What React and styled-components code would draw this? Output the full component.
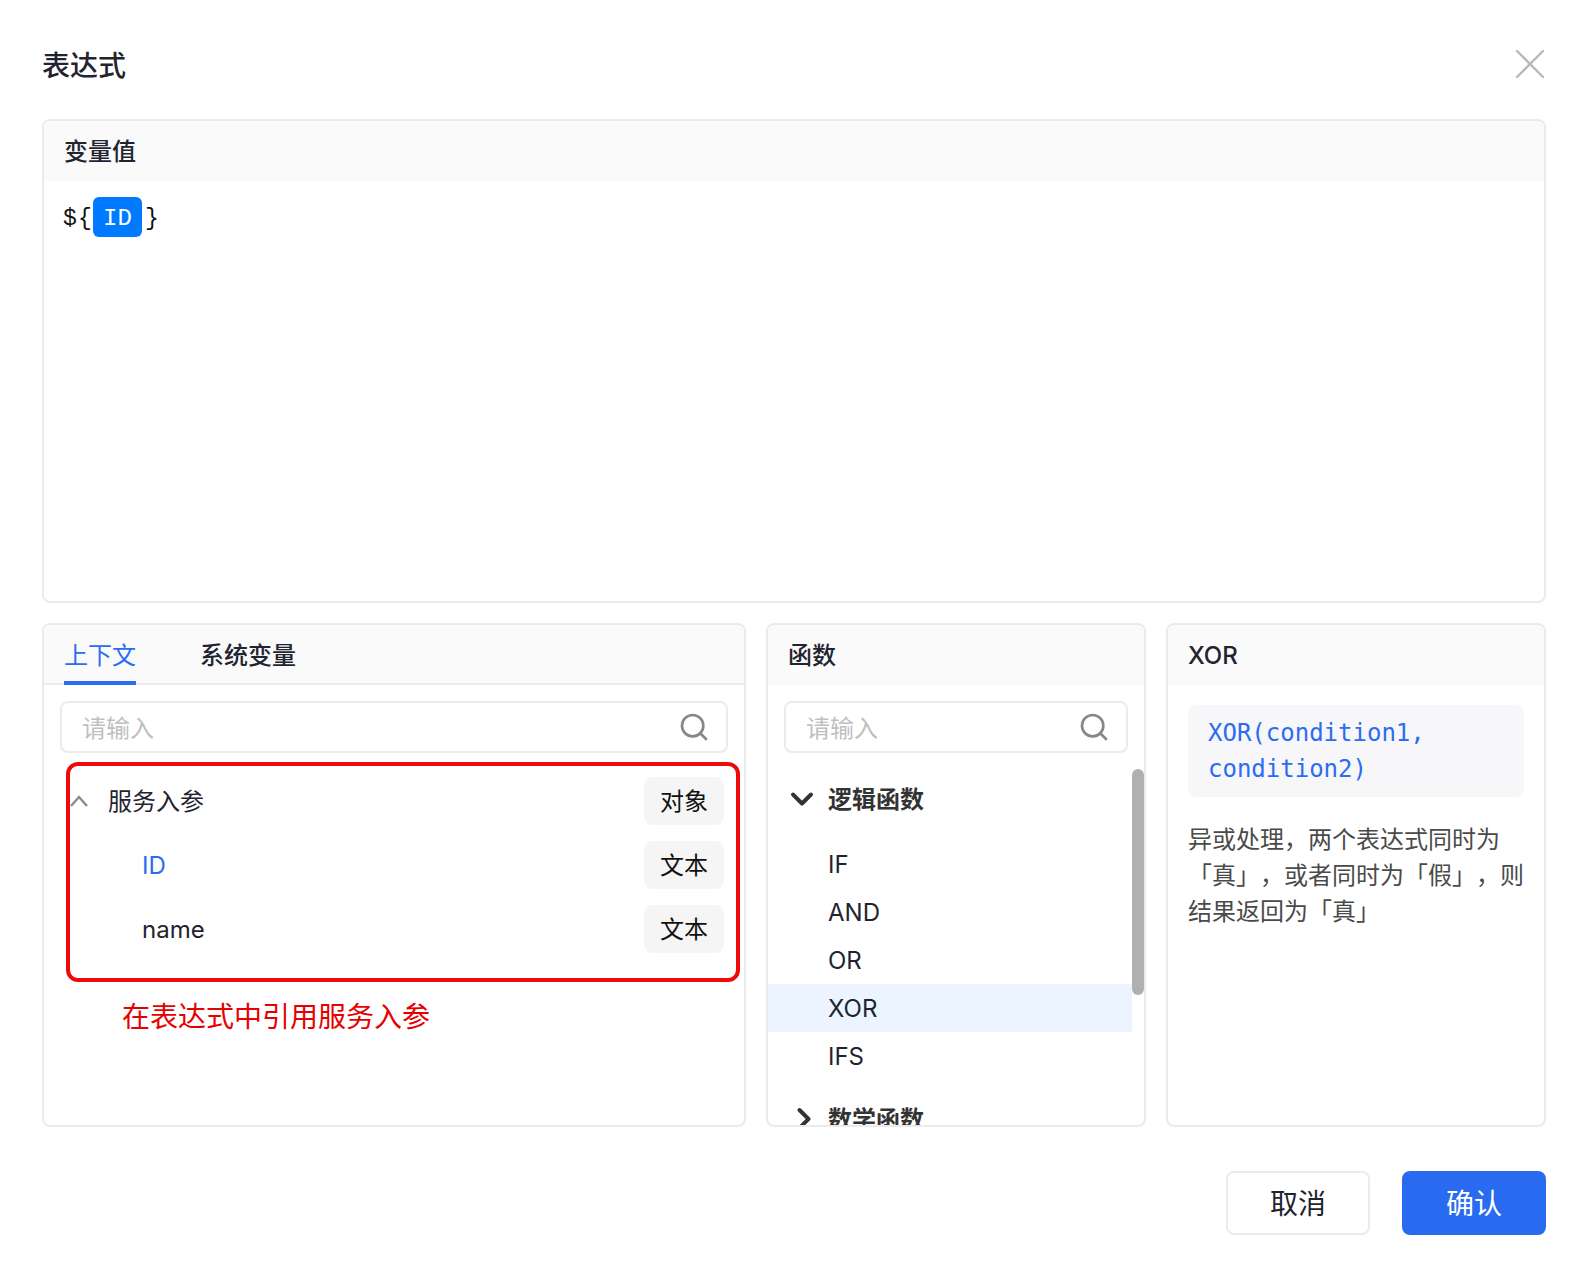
import React from 'react';
import styled, { createGlobalStyle } from 'styled-components';
import { ChevronDown, ChevronRight, Search } from 'lucide-react';

const GlobalStyle = createGlobalStyle`
  html, body {
    margin: 0;
    padding: 0;
    background: #fff;
  }

  * {
    box-sizing: border-box;
  }

  body {
    font-family: Inter, "Noto Sans CJK SC", "Noto Sans", sans-serif;
    color: #1f2430;
  }
`;

const Dialog = styled.div`
  width: 1588px;
  height: 1272px;
  padding: 0 42px;
`;

const DialogHeader = styled.header`
  height: 119px;
  display: flex;
  justify-content: space-between;
  padding-top: 47px;
`;

const Title = styled.h1`
  margin: 0;
  font-size: 28px;
  line-height: 38px;
  font-weight: 500;
`;

const CloseIcon = styled.svg`
  width: 30px;
  height: 30px;
  margin-top: 2px;
  margin-right: 1px;
  stroke: #b8b9be;
  stroke-width: 2.4;
  stroke-linecap: round;
`;

const Panel = styled.section`
  height: ${(p) => p.$height}px;
  border: 2px solid #ebebeb;
  border-radius: 8px;
  overflow: hidden;
  display: flex;
  flex-direction: column;
  background: #fff;
`;

const PanelHeader = styled.div`
  flex: none;
  height: 60px;
  padding: 0 20px ${(p) => (p.$cjk ? 4 : 0)}px;
  display: flex;
  align-items: center;
  background: #fafafa;
  font-size: 24px;
  font-weight: 500;
`;

const Editor = styled.div`
  display: flex;
  align-items: center;
  padding: 16px 19px;
  font-family: "Liberation Mono", monospace;
  font-size: 23px;
  color: #111;
`;

const Token = styled.span`
  width: ${(p) => p.$width}px;
  padding-top: 4px;
`;

const Chip = styled.span`
  width: 49px;
  height: 40px;
  margin-right: 3px;
  padding-top: 2px;
  border-radius: 6px;
  background: #007aff;
  color: #fff;
  font-size: 24px;
  display: flex;
  align-items: center;
  justify-content: center;
`;

const BottomGrid = styled.div`
  margin-top: 20px;
  display: grid;
  grid-template-columns: 704px 380px 380px;
  gap: 20px;
`;

const Tabs = styled.div`
  flex: none;
  height: 60px;
  padding: 0 20px;
  display: flex;
  gap: 64px;
  background: #fafafa;
  border-bottom: 2px solid #ebebeb;
`;

const Tab = styled.div`
  height: 60px;
  display: flex;
  align-items: center;
  font-size: 24px;
  font-weight: ${(p) => (p.$active ? 400 : 500)};
  color: ${(p) => (p.$active ? '#2b6cf0' : '#1f2430')};
  border-bottom: 4px solid ${(p) => (p.$active ? '#2b6cf0' : 'transparent')};
`;

const SearchBox = styled.div`
  flex: none;
  height: 52px;
  margin: 16px 16px 0;
  padding: 0 16px 0 20px;
  border: 2px solid #ebebeb;
  border-radius: 8px;
  display: flex;
  align-items: center;
  justify-content: space-between;
  font-size: 24px;
  color: #bfbfbf;

  svg {
    color: #86868c;
  }
`;

const Placeholder = styled.span`
  padding-bottom: 2px;
`;

const Tree = styled.div`
  position: relative;
  padding: 16px 20px 0 26px;
`;

const RedFrame = styled.div`
  position: absolute;
  top: 9px;
  left: 22px;
  width: 674px;
  height: 220px;
  border: 4px solid #ee0a0a;
  border-radius: 12px;
  pointer-events: none;
`;

const TreeRow = styled.div`
  height: 64px;
  display: flex;
  align-items: center;
  padding-left: ${(p) => p.$indent}px;
  font-size: 24px;
  color: ${(p) => (p.$active ? '#2b6cf0' : '#1f2430')};
`;

const CollapseIcon = styled.svg`
  flex: none;
  width: 18px;
  height: 12px;
  margin-right: 20px;
  fill: none;
  stroke: #8c8c8c;
  stroke-width: 2.4;
`;

const RowLabel = styled.span`
  flex: 1;
  padding-bottom: ${(p) => (p.$cjk ? 4 : 0)}px;
`;

const TypeTag = styled.span`
  width: 80px;
  height: 48px;
  padding-bottom: 4px;
  border-radius: 8px;
  background: #f5f5f5;
  color: #111;
  display: flex;
  align-items: center;
  justify-content: center;
`;

const Annotation = styled.p`
  margin: 36px 0 0 52px;
  font-size: 28px;
  line-height: 40px;
  color: #e60000;
`;

const FunctionArea = styled.div`
  flex: 1;
  min-height: 0;
  display: flex;
  overflow: hidden;
`;

const FunctionList = styled.div`
  width: 364px;
  padding-top: 23px;
`;

const GroupHeader = styled.div`
  height: 48px;
  padding-left: ${(p) => p.$pad}px;
  display: flex;
  align-items: center;
  font-size: 24px;
  font-weight: 700;
  color: #333;

  svg {
    margin-right: ${(p) => p.$gap}px;
    margin-bottom: 3px;
    flex: none;
  }

  span {
    padding-bottom: 6px;
  }
`;

const FunctionItems = styled.div`
  margin: 16px 0;
`;

const FunctionItem = styled.div`
  height: 48px;
  padding-left: 60px;
  display: flex;
  align-items: center;
  font-size: 24px;
  background: ${(p) => (p.$selected ? '#ebf4ff' : 'transparent')};
`;

const ScrollThumb = styled.div`
  width: 12px;
  height: 226px;
  margin-top: 16px;
  border-radius: 6px;
  background: #b0b0b0;
`;

const DetailBody = styled.div`
  padding: 20px 20px 0;
`;

const CodeBlock = styled.div`
  height: 92px;
  padding: 10px 20px;
  border-radius: 8px;
  background: #f7f7f9;
  font-family: "DejaVu Sans Mono", monospace;
  font-size: 24px;
  line-height: 36px;
  color: #2b6cf0;
`;

const Description = styled.p`
  margin: 25px 0 0;
  font-size: 24px;
  line-height: 36px;
  color: #4a4a4a;
  text-spacing-trim: space-all;
`;

const Footer = styled.footer`
  margin-top: 44px;
  display: flex;
  justify-content: flex-end;
  gap: 32px;
`;

const Button = styled.button`
  width: 144px;
  height: 64px;
  border-radius: 8px;
  border: 2px solid ${(p) => (p.$primary ? '#296bf0' : '#ebebeb')};
  background: ${(p) => (p.$primary ? '#296bf0' : '#fff')};
  color: ${(p) => (p.$primary ? '#fff' : '#1f2430')};
  font-family: inherit;
  font-size: 28px;
  padding: 0 0 3px;
`;

const rows = [
  { label: 'ID', type: '文本', active: true },
  { label: 'name', type: '文本' },
];

const functions = ['IF', 'AND', 'OR', 'XOR', 'IFS'];

function SearchInput() {
  return (
    <SearchBox>
      <Placeholder>请输入</Placeholder>
      <Search size={32} strokeWidth={2} />
    </SearchBox>
  );
}

export default function App() {
  return (
    <>
      <GlobalStyle />
      <Dialog>
        <DialogHeader>
          <Title>表达式</Title>
          <CloseIcon viewBox="0 0 30 30">
            <path d="M2 2 L28 28 M28 2 L2 28" />
          </CloseIcon>
        </DialogHeader>

        <Panel $height={484}>
          <PanelHeader $cjk>变量值</PanelHeader>
          <Editor>
            <Token $width={15}>$</Token>
            <Token $width={15}>{'{'}</Token>
            <Chip>ID</Chip>
            <Token>{'}'}</Token>
          </Editor>
        </Panel>

        <BottomGrid>
          <Panel $height={504}>
            <Tabs>
              <Tab $active>上下文</Tab>
              <Tab>系统变量</Tab>
            </Tabs>
            <SearchInput />
            <Tree>
              <RedFrame />
              <TreeRow $indent={0}>
                <CollapseIcon viewBox="0 0 18 12">
                  <path d="M1 11 L9 2 L17 11" />
                </CollapseIcon>
                <RowLabel $cjk>服务入参</RowLabel>
                <TypeTag>对象</TypeTag>
              </TreeRow>
              {rows.map((row) => (
                <TreeRow key={row.label} $indent={72} $active={row.active}>
                  <RowLabel>{row.label}</RowLabel>
                  <TypeTag>{row.type}</TypeTag>
                </TreeRow>
              ))}
              <Annotation>在表达式中引用服务入参</Annotation>
            </Tree>
          </Panel>

          <Panel $height={504}>
            <PanelHeader $cjk>函数</PanelHeader>
            <SearchInput />
            <FunctionArea>
              <FunctionList>
                <GroupHeader $pad={16} $gap={8}>
                  <ChevronDown size={36} strokeWidth={2.6} />
                  <span>逻辑函数</span>
                </GroupHeader>
                <FunctionItems>
                  {functions.map((name) => (
                    <FunctionItem key={name} $selected={name === 'XOR'}>{name}</FunctionItem>
                  ))}
                </FunctionItems>
                <GroupHeader $pad={18} $gap={6}>
                  <ChevronRight size={36} strokeWidth={2.6} />
                  <span>数学函数</span>
                </GroupHeader>
              </FunctionList>
              <ScrollThumb />
            </FunctionArea>
          </Panel>

          <Panel $height={504}>
            <PanelHeader>XOR</PanelHeader>
            <DetailBody>
              <CodeBlock>XOR(condition1,<br />condition2)</CodeBlock>
              <Description>异或处理，两个表达式同时为「真」，或者同时为「假」，则结果返回为「真」</Description>
            </DetailBody>
          </Panel>
        </BottomGrid>

        <Footer>
          <Button>取消</Button>
          <Button $primary>确认</Button>
        </Footer>
      </Dialog>
    </>
  );
}
